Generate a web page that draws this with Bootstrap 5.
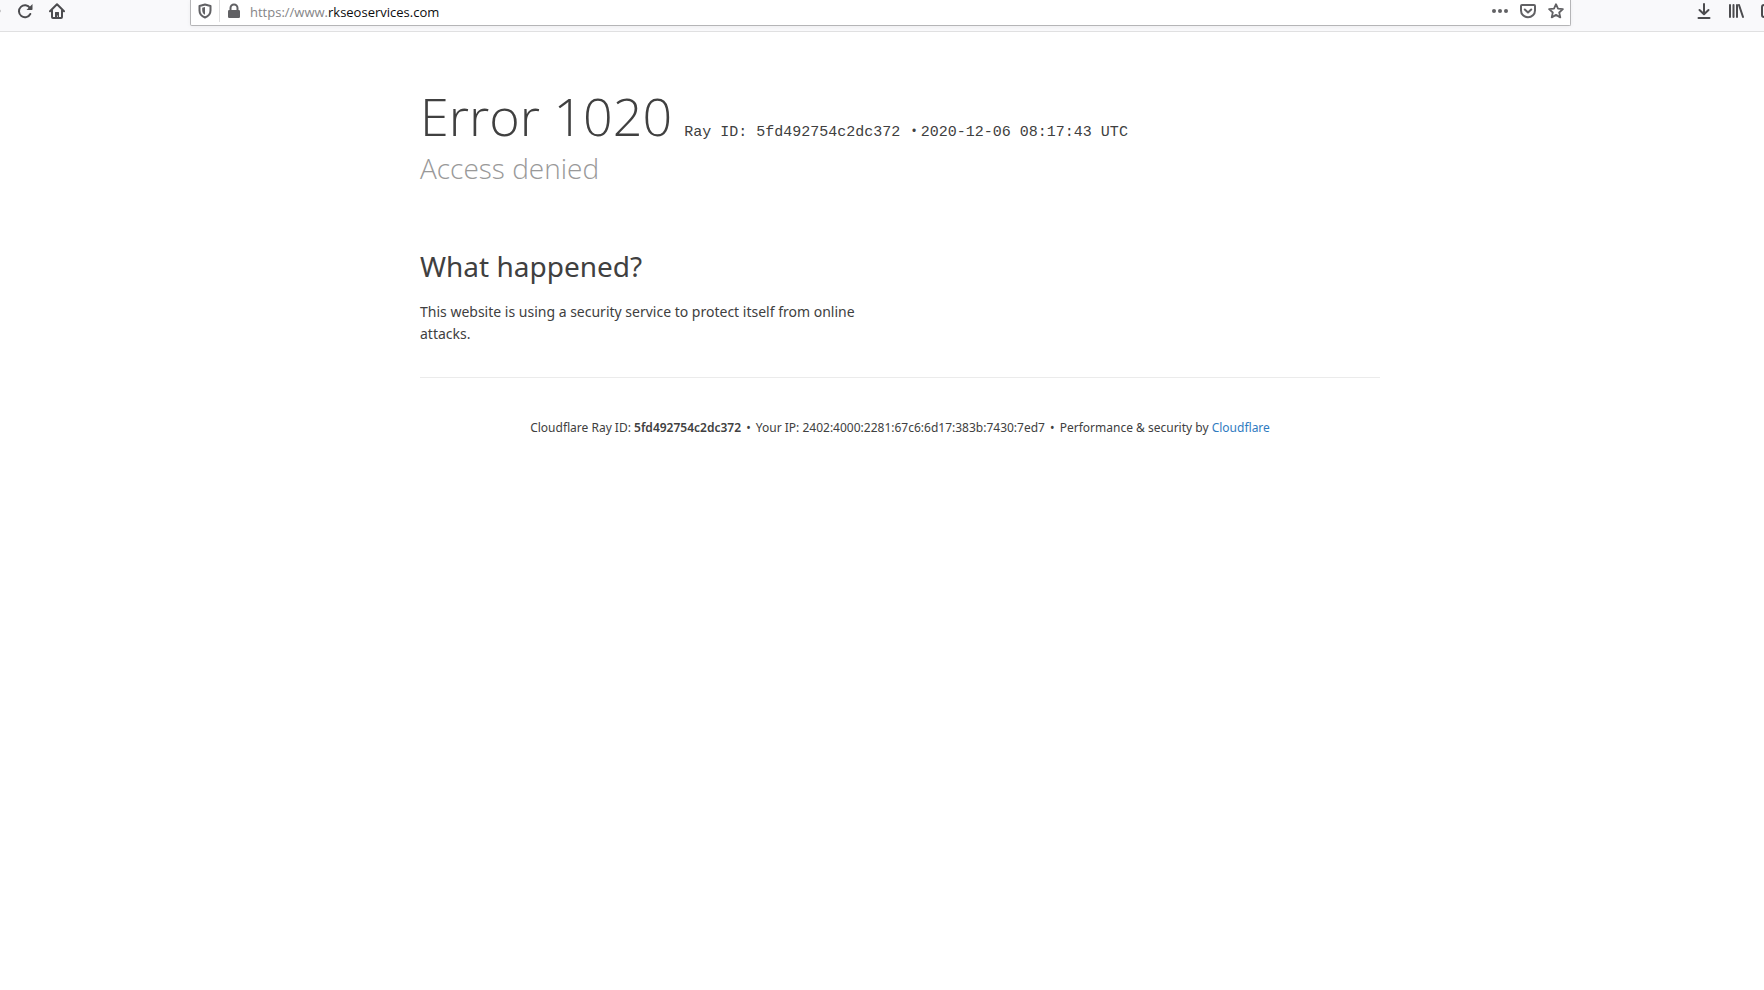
<!DOCTYPE html>
<html lang="en">
<head>
<meta charset="utf-8">
<meta name="viewport" content="width=device-width, initial-scale=1">
<title>Access denied</title>
<link href="https://cdn.jsdelivr.net/npm/bootstrap@5.3.0/dist/css/bootstrap.min.css" rel="stylesheet">
<style>
body { font-family: "Noto Sans", sans-serif; color: #404040; background: #fff; }
.toolbar { height: 32px; background: #f9f9fb; border-bottom: 1px solid #e0e0e1; color: #4c4c4f; overflow: hidden; }
.tool-btn { width: 32px; height: 22px; padding: 0; border: 0; background: none; color: inherit; display: flex; align-items: center; justify-content: center; flex: none; }
.tool-btn svg { display: block; flex: none; }
.tools-start { width: 190px; margin-left: -23px; flex: none; }
.tools-start-wrap { width: 190px; flex: none; }
.tools-end { width: 193px; flex: none; padding-left: 117px; }
.address { height: 26px; background: #fff; border: 1px solid #b5b5b7; border-top: 0; border-radius: 0 0 2px 2px; color: #616164; box-shadow: 0 1px 4px rgba(0,0,0,.05); }
.address .tool-btn { width: 28px; }
.shield-cell { border-right: 1px solid #dededf; height: 22px; }
.address-text { font: 13px/24px "Open Sans", sans-serif; height: 24px; padding-left: 2px; }
.scheme { color: #858587; }
.domain { color: #0c0c0d; border: 0; padding: 0; background: none; font: inherit; height: 24px; min-width: 0; outline: 0; }
.page-wrap { padding-left: 36px; }
.page-col { max-width: 960px; }
.title-row { gap: 12px; }
.error-title { font: 300 52px/72px "Open Sans", sans-serif; margin: 0; }
.ray { font: 15px/20px "Liberation Mono", monospace; }
.ray-dot { font-family: "Open Sans", sans-serif; margin: 0 4px 0 2px; }
.subtitle { font: 300 28px/32px "Open Sans", sans-serif; color: #999; margin: 0; }
.what-section { padding-top: 64px; }
.what { font: 400 28px/36px "Noto Sans", sans-serif; margin: 0 0 17px; }
.body-text { font-size: 14px; line-height: 22px; margin: 0; max-width: 451px; }
.foot { border-top: 1px solid #ebebeb; margin-top: 32px; padding-top: 40px; font-size: 12px; line-height: 20px; text-align: center; }
.foot a { color: #2f7bbf; text-decoration: none; }
.foot strong { font-weight: 600; }
.foot-dot { margin: 0 2px; }
</style>
</head>
<body>
<header class="toolbar d-flex align-items-start">
  <div class="tools-start-wrap">
  <nav class="tools-start d-flex" aria-label="Navigation">
    <button class="tool-btn" aria-label="Forward"><svg width="16" height="16" viewBox="0 0 16 16"><path d="M1 8h14M9 2l6 6-6 6" fill="none" stroke="#c4c4c6" stroke-width="2"/></svg></button>
    <button class="tool-btn" aria-label="Reload"><svg width="16" height="16" viewBox="0 0 16 16"><path d="M13 5A6 6 0 1 0 13.300 11" fill="none" stroke="currentColor" stroke-width="2" stroke-linecap="round"/><path d="M15.500 1v5.200q0 .8-.8.800H9.500z" fill="currentColor"/></svg></button>
    <button class="tool-btn" aria-label="Home"><svg width="16" height="16" viewBox="0 0 16 16"><path d="M1 8.300 8 1.300l7 7M3 7.500V14q0 1 1 1h8q1 0 1-1V7.500" fill="none" stroke="currentColor" stroke-width="2" stroke-linecap="round" stroke-linejoin="round"/><path d="M6 15V9.500q0-.5.500-.5h3q.500 0 .500.500V15H8.700v-2.500H8V15z" fill="currentColor"/></svg></button>
  </nav>
  </div>
  <div class="address d-flex flex-grow-1 align-items-start">
    <div class="shield-cell"><button class="tool-btn" aria-label="Tracking protection"><svg width="14" height="16" viewBox="0 0 14 16"><path d="M7 1.500 12.500 3v4.500q0 5-5.500 7-5.500-2-5.500-7V3z" fill="none" stroke="currentColor" stroke-width="2" stroke-linejoin="round"/><path d="M7 4v7.800Q4.200 10.500 4.200 7V4.700z" fill="currentColor"/></svg></button></div>
    <button class="tool-btn" aria-label="Site information"><svg width="14" height="16" viewBox="0 0 14 16"><path d="M3.500 8V5a3.500 3.500 0 0 1 7 0v3" fill="none" stroke="currentColor" stroke-width="2"/><rect x="1" y="7" width="12" height="8" rx="1.200" fill="currentColor"/></svg></button>
    <div class="address-text d-flex flex-grow-1"><label class="scheme" for="url">https://www.</label><input class="domain flex-grow-1" id="url" type="text" value="rkseoservices.com"></div>
    <button class="tool-btn" aria-label="Page actions"><svg width="16" height="16" viewBox="0 0 16 16" fill="currentColor"><circle cx="2" cy="8" r="2"/><circle cx="8" cy="8" r="2"/><circle cx="14" cy="8" r="2"/></svg></button>
    <button class="tool-btn" aria-label="Save to Pocket"><svg width="16" height="16" viewBox="0 0 16 16" fill="none" stroke="currentColor" stroke-width="2" stroke-linecap="round" stroke-linejoin="round"><path d="M2 2h12q1 0 1 1v4.500a7 6.800 0 0 1-14 0V3q0-1 1-1z"/><path d="m4.800 6.500 3.200 3 3.200-3"/></svg></button>
    <button class="tool-btn" aria-label="Bookmark"><svg width="16" height="16" viewBox="0 0 16 16"><path d="m8 1.200 2 4.500 4.900.5-3.700 3.300 1.100 4.900L8 11.900l-4.300 2.500 1.100-4.900L1.100 6.200 6 5.700z" fill="none" stroke="currentColor" stroke-width="1.800" stroke-linejoin="round"/></svg></button>
  </div>
  <div class="tools-end d-flex">
    <button class="tool-btn" aria-label="Downloads"><svg width="16" height="16" viewBox="0 0 16 16" fill="none" stroke="currentColor" stroke-width="2" stroke-linecap="round" stroke-linejoin="round"><path d="M8 1v10M3.500 7 8 11.300 12.500 7M2.500 15h11"/></svg></button>
    <button class="tool-btn" aria-label="Library"><svg width="16" height="16" viewBox="0 0 16 16" fill="none" stroke="currentColor" stroke-width="2" stroke-linecap="round"><path d="M2 2v12M5.500 2v12M9 2v12M11 2l4 12"/></svg></button>
    <button class="tool-btn" aria-label="Sidebars"><svg width="16" height="16" viewBox="0 0 16 16" fill="none" stroke="currentColor" stroke-width="2"><rect x="2" y="2" width="14" height="12" rx="2"/><path d="M5 5.500h4M5 8h4"/></svg></button>
  </div>
</header>

<div class="page-wrap">
  <main class="page-col mx-auto pt-5">
    <div class="title-row d-flex align-items-baseline">
      <h1 class="error-title">Error 1020</h1>
      <span class="ray">Ray ID: 5fd492754c2dc372 <span class="ray-dot">•</span>2020-12-06 08:17:43 UTC</span>
    </div>
    <h2 class="subtitle">Access denied</h2>
    <section class="what-section">
      <h2 class="what">What happened?</h2>
      <p class="body-text">This website is using a security service to protect itself from online attacks.</p>
    </section>
    <footer class="foot">Cloudflare Ray ID: <strong>5fd492754c2dc372</strong> <span class="foot-dot">•</span> Your IP: 2402:4000:2281:67c6:6d17:383b:7430:7ed7 <span class="foot-dot">•</span> Performance &amp; security by <a href="#">Cloudflare</a></footer>
  </main>
</div>
<script src="https://cdn.jsdelivr.net/npm/bootstrap@5.3.0/dist/js/bootstrap.bundle.min.js"></script>
</body>
</html>
